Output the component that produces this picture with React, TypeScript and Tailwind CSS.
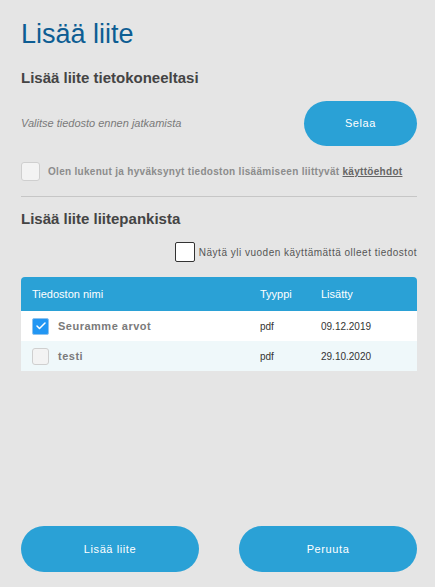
import { Check } from 'lucide-react';

interface Attachment {
  name: string;
  type: string;
  added: string;
  checked: boolean;
}

const files: Attachment[] = [
  { name: 'Seuramme arvot', type: 'pdf', added: '09.12.2019', checked: true },
  { name: 'testi', type: 'pdf', added: '29.10.2020', checked: false },
];

export default function App() {
  return (
    <div className="w-[435px] h-[587px] bg-[#e5e5e5] pl-[21px] pr-[18px] flex flex-col font-['Liberation_Sans',Arial,sans-serif]">
      <h1 className="pt-[18px] text-[27px] leading-[32px] text-[#0d5d93]">Lisää liite</h1>

      <h2 className="mt-[18px] text-[15px] leading-[20px] font-bold text-[#444]">Lisää liite tietokoneeltasi</h2>

      <div className="mt-[13px] flex items-center justify-between">
        <span className="text-[11px] italic text-[#7a7a7a]">Valitse tiedosto ennen jatkamista</span>
        <button className="w-[113px] h-[45px] rounded-full bg-[#2aa1d6] text-white text-[11px] tracking-[0.6px]">
          Selaa
        </button>
      </div>

      <div className="mt-[16px] flex items-center gap-[8px]">
        <div className="w-[19px] h-[19px] rounded-[3px] border border-[#cfcfcf] bg-[#f3f3f3]" />
        <span className="text-[10px] font-bold text-[#8c8c8c] tracking-[0.3px]">
          Olen lukenut ja hyväksynyt tiedoston lisäämiseen liittyvät{' '}
          <span className="underline text-[#666]">käyttöehdot</span>
        </span>
      </div>

      <div className="mt-[15px] border-t border-[#c6c6c6]" />

      <h2 className="mt-[12px] text-[15px] leading-[20px] font-bold text-[#444]">Lisää liite liitepankista</h2>

      <div className="mt-[13px] flex items-center justify-end gap-[4px]">
        <div className="w-[20px] h-[20px] rounded-[2px] border border-[#333] bg-white" />
        <span className="text-[10px] text-[#555] tracking-[0.5px]">Näytä yli vuoden käyttämättä olleet tiedostot</span>
      </div>

      <div className="mt-[15px]">
        <div className="h-[34px] rounded-t-[4px] bg-[#2aa1d6] text-white text-[11px] grid grid-cols-[228px_61px_1fr] items-center pl-[11px]">
          <span>Tiedoston nimi</span>
          <span>Tyyppi</span>
          <span>Lisätty</span>
        </div>
        {files.map((f, i) => (
          <div
            key={f.name}
            className={`h-[30px] grid grid-cols-[228px_61px_1fr] items-center pl-[11px] ${i % 2 === 0 ? 'bg-white' : 'bg-[#eff8fa]'}`}
          >
            <div className="flex items-center gap-[9px]">
              {f.checked ? (
                <div className="w-[17px] h-[17px] rounded-[2px] bg-[#2196f3] border border-[#8fc3ee] flex items-center justify-center">
                  <Check className="w-[12px] h-[12px] text-white" strokeWidth={3} />
                </div>
              ) : (
                <div className="w-[17px] h-[17px] rounded-[3px] border border-[#cfcfcf] bg-[#f3f3f3]" />
              )}
              <span className="text-[11px] font-bold tracking-[0.5px] text-[#7a7a7a]">{f.name}</span>
            </div>
            <span className="text-[10px] text-[#333]">{f.type}</span>
            <span className="text-[10px] text-[#333]">{f.added}</span>
          </div>
        ))}
      </div>

      <div className="mt-auto pb-[15px] flex gap-[40px]">
        <button className="flex-1 h-[46px] rounded-full bg-[#2aa1d6] text-white text-[11px] tracking-[0.6px]">Lisää liite</button>
        <button className="flex-1 h-[46px] rounded-full bg-[#2aa1d6] text-white text-[11px] tracking-[0.6px]">Peruuta</button>
      </div>
    </div>
  );
}
